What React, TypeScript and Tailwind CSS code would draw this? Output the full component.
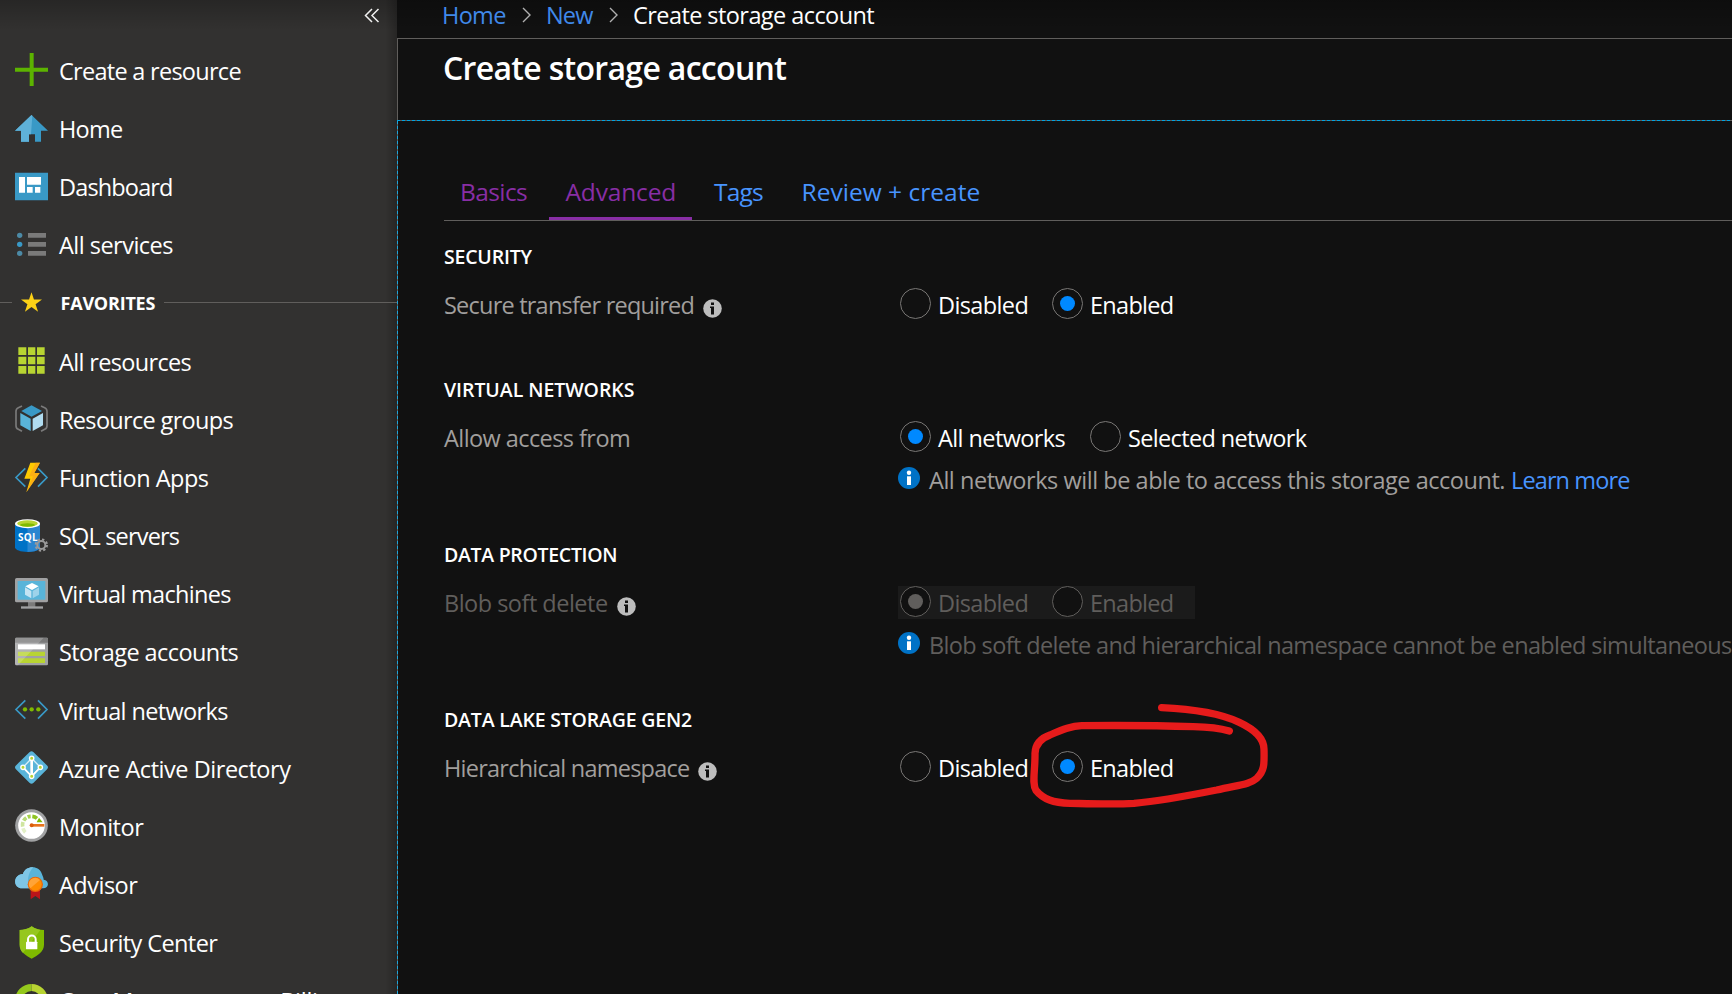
import type { ReactNode } from "react";

function Glyph({ children }: { children: ReactNode }) {
  return (
    <svg viewBox="0 0 99 99" className="-mt-[2px] h-[33px] w-[33px] shrink-0 overflow-visible" fill="none">
      {children}
    </svg>
  );
}

const PlusGlyph = () => (
  <Glyph>
    <path d="M44 0H56V44H99V56H56V99H44V56H0V44H44Z" fill="#5cb300" />
  </Glyph>
);

const HomeGlyph = () => (
  <Glyph>
    <path d="M49.5 9L99 56H78V89H60V67H42V89H18V56H0Z" fill="#3999c6" />
    <path d="M49.5 9L0 56H18V89H42V67H48L52 11Z" fill="#5fb1d8" />
  </Glyph>
);

const DashboardGlyph = () => (
  <Glyph>
    <path d="M0 8H99V91H0Z" fill="#3999c6" />
    <path d="M12 21H30V68H12ZM36 21H78V44H36ZM36 51H53V68H36ZM60 51H76V68H60Z" fill="#fff" />
  </Glyph>
);

const ServicesGlyph = () => (
  <Glyph>
    <circle cx="14" cy="22" r="8" fill="#4c8aa6" />
    <circle cx="14" cy="49" r="8" fill="#3999c6" />
    <circle cx="14" cy="76" r="8" fill="#4c8aa6" />
    <path d="M39 15H93V29H39ZM39 42H93V56H39ZM39 69H93V83H39Z" fill="#7a7a7a" />
  </Glyph>
);

const GridGlyph = () => (
  <Glyph>
    <path
      d="M10 10H34V33H10ZM39 10H61V33H39ZM66 10H89V33H66ZM10 38H34V61H10ZM39 38H61V61H39ZM66 38H89V61H66ZM10 66H34V89H10ZM39 66H61V89H39ZM66 66H89V89H66Z"
      fill="#b8d432"
    />
  </Glyph>
);

const GroupGlyph = () => (
  <Glyph>
    <path d="M21 12L10 17Q3 20 3 28V71Q3 79 10 82L21 88M78 12L89 17Q96 20 96 28V71Q96 79 89 82L78 88" stroke="#7a7a7a" strokeWidth="5" />
    <path d="M49.5 10L81 27L49.5 44L19 27Z" fill="#3999c6" />
    <path d="M16 33L47 50V87L16 70Z" fill="#59b4d9" />
    <path d="M53 50L84 33V70L53 87Z" fill="#b0dcf0" />
  </Glyph>
);

const FunctionGlyph = () => (
  <Glyph>
    <path d="M31 22L3 49.5L31 77M69 22L96 49.5L69 77" stroke="#3999c6" strokeWidth="5" />
    <path d="M46 5H75L58 36H74L34 94L46 53H28Z" fill="#ffca00" />
    <path d="M62 5H75L58 36H74L34 94L54 46H42Z" fill="#f9a61a" opacity=".75" />
  </Glyph>
);

const SqlGlyph = () => (
  <Glyph>
    <path d="M0 14V85C0 93 17 99 37.5 99S75 93 75 85V14Z" fill="#0072c6" />
    <path d="M37.5 14V99C58 99 75 93 75 85V14Z" fill="#2a86d0" />
    <ellipse cx="37.5" cy="14" rx="37.5" ry="13.5" fill="#fff" />
    <ellipse cx="37.5" cy="13.5" rx="31" ry="9.5" fill="#b8d432" />
    <ellipse cx="37.5" cy="18" rx="22" ry="5" fill="#7fba00" />
    <text x="9" y="66" fontSize="30" fontWeight="700" fontFamily="Open Sans, sans-serif" fill="#fff" textLength="59">
      SQL
    </text>
    <circle cx="79" cy="78" r="17" stroke="#9a9a9a" strokeWidth="6" strokeDasharray="7 6.350" />
    <circle cx="79" cy="78" r="12" stroke="#9a9a9a" strokeWidth="6" />
  </Glyph>
);

const MachineGlyph = () => (
  <Glyph>
    <path d="M39 74H61V90H39Z" fill="#7a7a7a" />
    <path d="M18 88H84V95H18Z" fill="#a0a1a2" />
    <rect y="3" width="99" height="73" rx="5" fill="#a0a1a2" />
    <path d="M8 12H91V68H8Z" fill="#59b4d9" />
    <path d="M51 18L71 28L51 39L31 28Z" fill="#fff" />
    <path d="M30 31L49 42V64L30 53Z" fill="#c5e4f3" />
    <path d="M53 42L72 31V53L53 64Z" fill="#9dd3ea" />
  </Glyph>
);

const StorageGlyph = () => (
  <Glyph>
    <rect y="8" width="99" height="83" rx="4" fill="#a0a1a2" />
    <path d="M0 12Q0 8 4 8H95Q99 8 99 12V23H0Z" fill="#7a7a7a" />
    <path d="M9 28H90V43H9Z" fill="#fff" />
    <path d="M9 50H90V63H9ZM9 70H90V84H9Z" fill="#b8d432" />
    <path d="M4 8H86L9 91H4L0 87V12Z" fill="#fff" opacity=".2" />
  </Glyph>
);

const NetworkGlyph = () => (
  <Glyph>
    <path d="M31 22L3 49.500L31 77M69 22L96 49.500L69 77" stroke="#3999c6" strokeWidth="5" />
    <circle cx="30" cy="49" r="6.500" fill="#7fba00" />
    <circle cx="50" cy="49" r="6.500" fill="#7fba00" />
    <circle cx="70" cy="49" r="6.500" fill="#7fba00" />
  </Glyph>
);

const DirectoryGlyph = () => (
  <Glyph>
    <path d="M44 3Q49.500 -1 55 3L97 44Q101 49 97 54L55 96Q49.500 100 44 96L2 54Q-2 49 2 44Z" fill="#59b4d9" />
    <path d="M50 22L24 49L50 76L76 49Z" stroke="#d8eef7" strokeWidth="4" />
    <path d="M24 49L50 76L76 49" stroke="#fff" strokeWidth="5" />
    <path d="M50 22V76" stroke="#fff" strokeWidth="8" />
    <g fill="#b8d432" stroke="#fff" strokeWidth="4">
      <circle cx="50" cy="22" r="6.500" />
      <circle cx="24" cy="49" r="6.500" />
      <circle cx="76" cy="49" r="6.500" />
      <circle cx="50" cy="76" r="6.500" />
    </g>
  </Glyph>
);

const MonitorGlyph = () => (
  <Glyph>
    <circle cx="49.500" cy="49.500" r="49" fill="#a0a1a2" />
    <circle cx="49.500" cy="49.500" r="40" fill="#fff" />
    <g strokeWidth="11">
      <path d="M31 70A27 27 0 0 1 24 58" stroke="#e3f0c8" />
      <path d="M23 53A27 27 0 0 1 24 39" stroke="#cfe5a0" />
      <path d="M26 35A27 27 0 0 1 34 26" stroke="#b9da78" />
      <path d="M38 24A27 27 0 0 1 47 22" stroke="#a5d04c" />
      <path d="M52 22A27 27 0 0 1 66 28" stroke="#8fc422" />
    </g>
    <path d="M72 26L83 40H65Z" fill="#7fba00" />
    <path d="M49 49H88" stroke="#e8731c" strokeWidth="8" />
    <circle cx="50" cy="49" r="6" fill="#d95c0a" />
  </Glyph>
);

const AdvisorGlyph = () => (
  <Glyph>
    <path d="M22 64C-7 64 -7 22 24 21C30 -5 74 -8 81 22C84 29 86 34 86 38C103 39 104 64 84 64Z" fill="#59b4d9" />
    <path d="M22 64C-7 64 -7 22 24 21C28 6 42 0 55 1C38 18 36 42 42 64Z" fill="#7fc6e6" />
    <path d="M47 68H75V97L61 87L47 97Z" fill="#ba141a" />
    <circle cx="61" cy="52" r="23" fill="#e8670c" />
    <circle cx="61" cy="52" r="19" fill="#ff8c00" />
    <path d="M46 64A19 19 0 0 1 75 39Z" fill="#ffa437" />
  </Glyph>
);

const SecurityGlyph = () => (
  <Glyph>
    <path d="M50 1C60 9 74 12 87 12V56C87 77 67 88 50 98C33 88 14 77 14 56V12C27 12 40 9 50 1Z" fill="#7fba00" />
    <path d="M50 1C60 9 68 10 76 12L24 81C17 74 14 66 14 56V12C27 12 40 9 50 1Z" fill="#96c71e" />
    <path d="M39 48V40A11 11 0 0 1 62 40V48" stroke="#fff" strokeWidth="6" />
    <rect x="33" y="47" width="34" height="23" rx="2" fill="#fff" />
  </Glyph>
);

const CostGlyph = () => (
  <Glyph>
    <path d="M49.500 10.500A39 39 0 0 0 49.500 88.500" stroke="#94c81c" strokeWidth="21" />
    <path d="M49.500 10.500A39 39 0 0 1 49.500 88.500" stroke="#b8d432" strokeWidth="21" />
  </Glyph>
);

type NavItem = { label: string; icon: ReactNode; tracking: string };

const primary: NavItem[] = [
  { label: "Create a resource", icon: <PlusGlyph />, tracking: "tracking-[-0.72px]" },
  { label: "Home", icon: <HomeGlyph />, tracking: "tracking-[-0.75px]" },
  { label: "Dashboard", icon: <DashboardGlyph />, tracking: "tracking-[-0.85px]" },
  { label: "All services", icon: <ServicesGlyph />, tracking: "tracking-[-0.52px]" },
];

const favorites: NavItem[] = [
  { label: "All resources", icon: <GridGlyph />, tracking: "tracking-[-0.66px]" },
  { label: "Resource groups", icon: <GroupGlyph />, tracking: "tracking-[-0.67px]" },
  { label: "Function Apps", icon: <FunctionGlyph />, tracking: "tracking-[-0.5px]" },
  { label: "SQL servers", icon: <SqlGlyph />, tracking: "tracking-[-0.83px]" },
  { label: "Virtual machines", icon: <MachineGlyph />, tracking: "tracking-[-0.68px]" },
  { label: "Storage accounts", icon: <StorageGlyph />, tracking: "tracking-[-0.57px]" },
  { label: "Virtual networks", icon: <NetworkGlyph />, tracking: "tracking-[-0.63px]" },
  { label: "Azure Active Directory", icon: <DirectoryGlyph />, tracking: "tracking-[-0.46px]" },
  { label: "Monitor", icon: <MonitorGlyph />, tracking: "tracking-[-0.5px]" },
  { label: "Advisor", icon: <AdvisorGlyph />, tracking: "tracking-[-0.5px]" },
  { label: "Security Center", icon: <SecurityGlyph />, tracking: "tracking-[-0.59px]" },
  { label: "Cost Management + Billing", icon: <CostGlyph />, tracking: "tracking-[-0.25px]" },
];

function NavRow({ item }: { item: NavItem }) {
  return (
    <a className="flex h-[58.125px] shrink-0 items-center gap-[11px] pl-[15px] text-white">
      {item.icon}
      <span className={`whitespace-nowrap ${item.tracking}`}>{item.label}</span>
    </a>
  );
}

function Sidebar() {
  return (
    <nav className="flex h-full w-[397px] shrink-0 flex-col overflow-hidden bg-[#323130] bg-[linear-gradient(to_left,rgba(0,0,0,0.24),transparent_12px),linear-gradient(to_bottom,rgba(0,0,0,0.22),transparent_30px)]">
      <div className="flex h-[41.9px] shrink-0 items-start justify-end pt-2 pr-[17px]">
        <svg className="h-[15px] w-4" viewBox="0 0 16 15" fill="none" stroke="#f0f0f0" strokeWidth="1.500">
          <path d="M8 1L1.500 7.500L8 14M14.500 1L8 7.500L14.500 14" />
        </svg>
      </div>
      {primary.map((item) => (
        <NavRow key={item.label} item={item} />
      ))}
      <div className="flex h-[58.4px] shrink-0 items-center pb-[2px]">
        <div className="-mt-px h-px w-3 bg-[#605e5c]" />
        <svg viewBox="0 0 64 60" className="-mt-px ml-[9px] h-5 w-[21px]">
          <path d="M32 0L39.500 22.500H64L44.500 36.500L52 60L32 45.500L12 60L19.500 36.500L0 22.500H24.500Z" fill="#fcd116" />
        </svg>
        <span className="ml-[18.500px] w-[103.500px] pt-px text-[18px] font-bold tracking-[-0.21px] text-white">FAVORITES</span>
        <div className="-mt-px h-px flex-1 bg-[#605e5c]" />
      </div>
      {favorites.map((item) => (
        <NavRow key={item.label} item={item} />
      ))}
    </nav>
  );
}

function Chevron() {
  return (
    <svg className="h-4 w-[9px] shrink-0" viewBox="0 0 9 16" fill="none" stroke="#b0b0b0" strokeWidth="1.400">
      <path d="M1 1L8 8L1 15" />
    </svg>
  );
}

function HelpMark() {
  return (
    <svg className="mt-[8px] ml-[9px] h-[19px] w-[19px] shrink-0" viewBox="0 0 19 19">
      <circle cx="9.500" cy="9.500" r="9.300" fill="#bdbdbd" />
      <path d="M8 3.500H11V6H8ZM7 7.500H11V15.500H8V9H7Z" fill="#111" />
    </svg>
  );
}

function NoteMark() {
  return (
    <svg className="-mt-1 h-[22px] w-[22px] shrink-0" viewBox="0 0 22 22">
      <circle cx="11" cy="11" r="11" fill="#0072c6" />
      <circle cx="11" cy="5.700" r="2.200" fill="#fff" />
      <path d="M9 9.300H13V18H9Z" fill="#fff" />
    </svg>
  );
}

type OptionProps = { label: string; on?: boolean; dim?: boolean; width: string; tracking: string };

function Option({ label, on, dim, width, tracking }: OptionProps) {
  return (
    <label className={`flex h-[33px] items-center ${width}`}>
      <span
        className={`mb-[2px] flex h-[31px] w-[31px] shrink-0 items-center justify-center rounded-full border bg-[#111] ${
          dim ? "border-[#605e5c]" : "border-[#797775]"
        }`}
      >
        {on && <span className={`h-[15px] w-[15px] rounded-full ${dim ? "bg-[#605e5c]" : "bg-[#0089ff]"}`} />}
      </span>
      <span className={`ml-[7px] whitespace-nowrap ${tracking} ${dim ? "text-[#605e5c]" : "text-white"}`}>{label}</span>
    </label>
  );
}

type SectionProps = {
  title: string;
  titleTracking: string;
  label: string;
  labelTracking: string;
  help?: boolean;
  dim?: boolean;
  height: string;
  children: ReactNode;
  note?: ReactNode;
};

function Section({ title, titleTracking, label, labelTracking, help, dim, height, children, note }: SectionProps) {
  return (
    <section className={`shrink-0 ${height}`}>
      <h2 className={`mb-[18px] h-7 text-[19.500px] leading-[30px] font-semibold text-white ${titleTracking}`}>{title}</h2>
      <div className="flex h-[33px] items-center">
        <div className="flex w-[454px] shrink-0 items-center">
          <span className={`whitespace-nowrap ${labelTracking} ${dim ? "text-[#605e5c]" : "text-[#a19f9d]"}`}>{label}</span>
          {help && <HelpMark />}
        </div>
        <div className={`flex pl-[2px] ${dim ? "w-[297px] bg-[#1b1b1b]" : ""}`}>{children}</div>
      </div>
      {note && <div className="mt-[9px] ml-[454px] flex h-[33px] items-center gap-[9px] whitespace-nowrap">{note}</div>}
    </section>
  );
}

function Tabs() {
  return (
    <div className="flex h-[62px] shrink-0 border-b border-[#605e5c] text-[24.500px] whitespace-nowrap text-[#4894fe]">
      <div className="flex w-[105px] items-center pt-[5px] pl-4 tracking-[-0.6px] text-[#882ea5]">Basics</div>
      <div className="flex w-[143px] items-center border-b-[3px] border-[#882ea5] pt-[8px] pl-[16.500px] tracking-[-0.15px] text-[#882ea5]">
        Advanced
      </div>
      <div className="flex w-[109.500px] items-center pt-[5px] pl-[22px] tracking-[-0.82px]">Tags</div>
      <div className="flex items-center pt-[5px] tracking-[0.02px]">Review + create</div>
    </div>
  );
}

export default function App() {
  return (
    <div className="relative flex h-[994px] w-[1732px] overflow-hidden bg-[#111] font-['Open_Sans','Noto_Sans',sans-serif] text-[23.500px] leading-[32px]">
      <Sidebar />
      <main className="flex min-w-0 flex-1 flex-col overflow-hidden">
        <div className="flex h-[38px] shrink-0 items-center bg-[linear-gradient(to_bottom,rgba(0,0,0,0.22),transparent_30px)] pb-[8px] pl-[45px] whitespace-nowrap">
          <span className="w-[80px] tracking-[-0.67px] text-[#4089ea]">Home</span>
          <Chevron />
          <span className="ml-[15px] w-[63px] tracking-[-0.85px] text-[#4089ea]">New</span>
          <Chevron />
          <span className="ml-[15px] tracking-[-0.57px] text-white">Create storage account</span>
        </div>
        <div className="flex h-[82px] shrink-0 border-t border-l border-[#605e5c] pt-2 pl-[45px]">
          <h1 className="text-[32px] leading-[42px] font-semibold tracking-[-0.69px] text-white">Create storage account</h1>
        </div>
        <div className="h-px shrink-0 bg-[repeating-linear-gradient(to_right,#00a3e0_0_3px,#605e5c_3px_5px)]" />
        <div className="flex min-h-0 flex-1">
          <div className="w-px shrink-0 bg-[repeating-linear-gradient(to_bottom,#1aa7dd_0_3px,#605e5c_3px_5px)]" />
          <div className="flex min-w-0 flex-1 flex-col overflow-hidden pt-[38px] pl-[46px]">
            <Tabs />
            <div className="h-[21px] shrink-0" />
            <Section
              title="SECURITY"
              titleTracking="tracking-[-0.2px]"
              label="Secure transfer required"
              labelTracking="tracking-[-0.78px]"
              help
              height="h-[133px]"
            >
              <Option label="Disabled" width="w-[152px]" tracking="tracking-[-0.62px]" />
              <Option label="Enabled" on width="w-[143px]" tracking="tracking-[-0.7px]" />
            </Section>
            <Section
              title="VIRTUAL NETWORKS"
              titleTracking="tracking-[-0.05px]"
              label="Allow access from"
              labelTracking="tracking-[-0.57px]"
              height="h-[165px]"
              note={
                <>
                  <NoteMark />
                  <span className="tracking-[-0.46px] text-[#a19f9d]">All networks will be able to access this storage account.</span>
                  <a className="-ml-[3px] tracking-[-0.9px] text-[#4894fe]">Learn more</a>
                </>
              }
            >
              <Option label="All networks" on width="w-[190px]" tracking="tracking-[-0.59px]" />
              <Option label="Selected network" width="w-[220px]" tracking="tracking-[-0.65px]" />
            </Section>
            <Section
              title="DATA PROTECTION"
              titleTracking="tracking-[-0.3px]"
              label="Blob soft delete"
              labelTracking="tracking-[-0.51px]"
              help
              dim
              height="h-[165px]"
              note={
                <>
                  <NoteMark />
                  <span className="tracking-[-0.63px] text-[#605e5c]">
                    Blob soft delete and hierarchical namespace cannot be enabled simultaneous
                  </span>
                </>
              }
            >
              <Option label="Disabled" on dim width="w-[152px]" tracking="tracking-[-0.62px]" />
              <Option label="Enabled" dim width="w-[143px]" tracking="tracking-[-0.7px]" />
            </Section>
            <Section
              title="DATA LAKE STORAGE GEN2"
              titleTracking="tracking-[-0.18px]"
              label="Hierarchical namespace"
              labelTracking="tracking-[-0.76px]"
              help
              height="h-[133px]"
            >
              <Option label="Disabled" width="w-[152px]" tracking="tracking-[-0.62px]" />
              <Option label="Enabled" on width="w-[143px]" tracking="tracking-[-0.7px]" />
            </Section>
          </div>
        </div>
      </main>
      <svg
        viewBox="0 0 780 390"
        className="pointer-events-none absolute top-[690px] left-[1020px] h-[130px] w-[260px]"
        fill="none"
        stroke="#e61b1b"
        strokeWidth="22"
        strokeLinecap="round"
        strokeLinejoin="round"
      >
        <path d="M425 53C520 57 600 70 658 97C705 119 732 145 732 178C733 222 734 243 710 265C690 283 660 284 590 300C500 318 430 332 342 340C280 344 200 341 150 340C100 338 70 328 48 301C35 280 46 240 45 190C46 165 62 145 90 135C130 118 155 108 185 107C300 106 400 106 520 110C570 111 600 115 628 123" />
      </svg>
    </div>
  );
}
